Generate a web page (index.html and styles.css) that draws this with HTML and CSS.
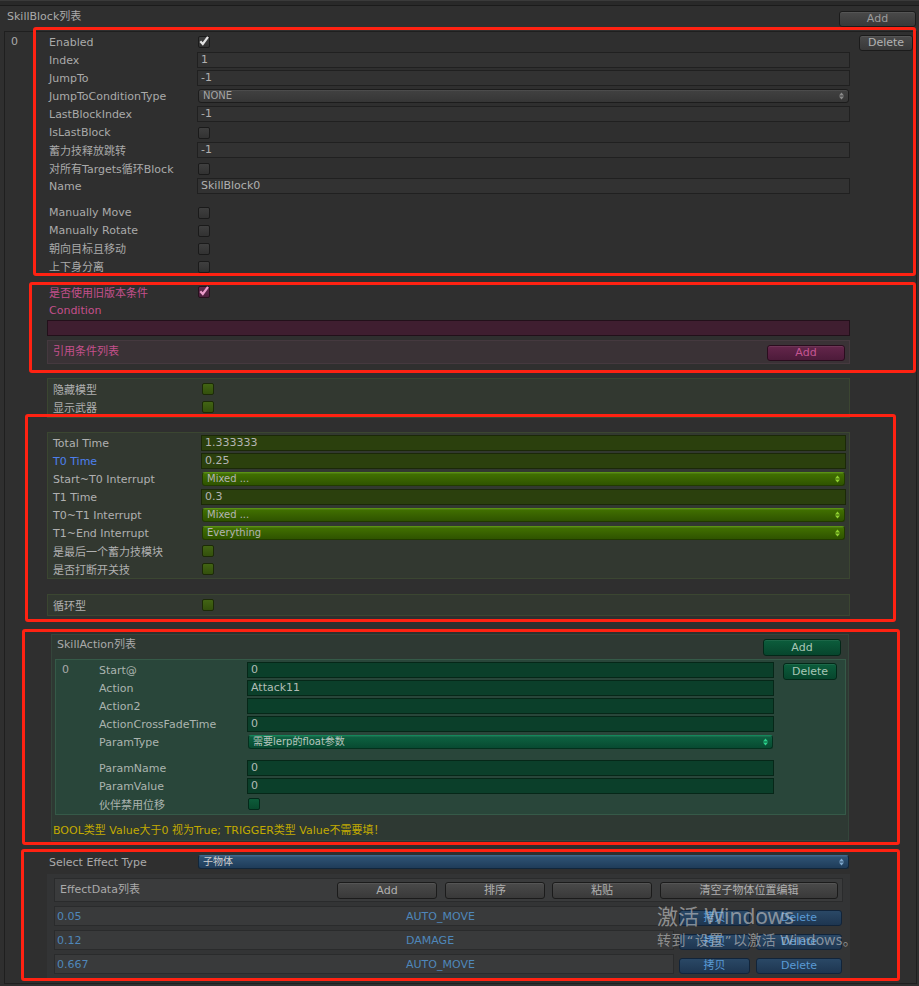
FILE: index.html
```html
<!DOCTYPE html>
<html lang="zh">
<head>
<meta charset="utf-8">
<title>SkillBlock列表</title>
<link rel="stylesheet" href="styles.css">
</head>
<body>
<div class="topbar"></div>
<div class="header"><span class="title">SkillBlock列表</span><button class="btn addtop">Add</button></div>
<div class="list">
  <div class="idx">0</div>
  <div class="content">
    <div class="row"><div class="lbl">Enabled</div><div class="chk"><svg viewBox="0 0 12 12" width="12" height="12"><path d="M2.3 6.2 L4.8 9 L10 1.8" fill="none" stroke="#e4e4e4" stroke-width="2.2"/></svg></div></div>
    <div class="row"><div class="lbl">Index</div><div class="fld">1</div></div>
    <div class="row"><div class="lbl">JumpTo</div><div class="fld">-1</div></div>
    <div class="row"><div class="lbl">JumpToConditionType</div><div class="pop"><span>NONE</span><svg class="arr" viewBox="0 0 5 8" width="5" height="8"><path d="M0 3.5L2.5 0.5L5 3.5Z M0 4.5L2.5 7.5L5 4.5Z"/></svg></div></div>
    <div class="row"><div class="lbl">LastBlockIndex</div><div class="fld">-1</div></div>
    <div class="row"><div class="lbl">IsLastBlock</div><div class="chk low"></div></div>
    <div class="row"><div class="lbl">蓄力技释放跳转</div><div class="fld">-1</div></div>
    <div class="row"><div class="lbl">对所有Targets循环Block</div><div class="chk low"></div></div>
    <div class="row"><div class="lbl">Name</div><div class="fld">SkillBlock0</div></div>
    <div class="sp8"></div>
    <div class="row"><div class="lbl">Manually Move</div><div class="chk low"></div></div>
    <div class="row"><div class="lbl">Manually Rotate</div><div class="chk low"></div></div>
    <div class="row"><div class="lbl">朝向目标且移动</div><div class="chk low"></div></div>
    <div class="row"><div class="lbl">上下身分离</div><div class="chk low"></div></div>
    <div class="sp8"></div>
    <div class="pink">
      <div class="row"><div class="lbl">是否使用旧版本条件</div><div class="chk"><svg viewBox="0 0 12 12" width="12" height="12"><path d="M2.3 6.2 L4.8 9 L10 1.8" fill="none" stroke="#ec9ccb" stroke-width="2.2"/></svg></div></div>
      <div class="row"><div class="lbl">Condition</div></div>
      <div class="pfld"></div>
      <div class="pbox"><span>引用条件列表</span><button class="btn">Add</button></div>
    </div>
    <div class="gbox g1">
      <div class="row"><div class="lbl">隐藏模型</div><div class="chk"></div></div>
      <div class="row"><div class="lbl">显示武器</div><div class="chk"></div></div>
    </div>
    <div class="gbox g2">
      <div class="row"><div class="lbl">Total Time</div><div class="fld">1.333333</div></div>
      <div class="row"><div class="lbl blue">T0 Time</div><div class="fld">0.25</div></div>
      <div class="row"><div class="lbl">Start~T0 Interrupt</div><div class="pop"><span>Mixed ...</span><svg class="arr" viewBox="0 0 5 8" width="5" height="8"><path d="M0 3.5L2.5 0.5L5 3.5Z M0 4.5L2.5 7.5L5 4.5Z"/></svg></div></div>
      <div class="row"><div class="lbl">T1 Time</div><div class="fld">0.3</div></div>
      <div class="row"><div class="lbl">T0~T1 Interrupt</div><div class="pop"><span>Mixed ...</span><svg class="arr" viewBox="0 0 5 8" width="5" height="8"><path d="M0 3.5L2.5 0.5L5 3.5Z M0 4.5L2.5 7.5L5 4.5Z"/></svg></div></div>
      <div class="row"><div class="lbl">T1~End Interrupt</div><div class="pop"><span>Everything</span><svg class="arr" viewBox="0 0 5 8" width="5" height="8"><path d="M0 3.5L2.5 0.5L5 3.5Z M0 4.5L2.5 7.5L5 4.5Z"/></svg></div></div>
      <div class="row"><div class="lbl">是最后一个蓄力技模块</div><div class="chk"></div></div>
      <div class="row"><div class="lbl">是否打断开关技</div><div class="chk"></div></div>
    </div>
    <div class="gbox g3">
      <div class="row"><div class="lbl">循环型</div><div class="chk"></div></div>
    </div>
    <div class="tbox">
      <div class="thead"><span>SkillAction列表</span><button class="btn tadd">Add</button></div>
      <div class="tinner">
        <div class="tidx">0</div>
        <div class="tcontent">
          <div class="row"><div class="lbl">Start@</div><div class="fld">0</div></div>
          <div class="row"><div class="lbl">Action</div><div class="fld">Attack11</div></div>
          <div class="row"><div class="lbl">Action2</div><div class="fld"></div></div>
          <div class="row"><div class="lbl">ActionCrossFadeTime</div><div class="fld">0</div></div>
          <div class="row"><div class="lbl">ParamType</div><div class="pop"><span class="cjk">需要lerp的float参数</span><svg class="arr" viewBox="0 0 5 8" width="5" height="8"><path d="M0 3.5L2.5 0.5L5 3.5Z M0 4.5L2.5 7.5L5 4.5Z"/></svg></div></div>
          <div class="sp8"></div>
          <div class="row"><div class="lbl">ParamName</div><div class="fld">0</div></div>
          <div class="row"><div class="lbl">ParamValue</div><div class="fld">0</div></div>
          <div class="row"><div class="lbl">伙伴禁用位移</div><div class="chk"></div></div>
        </div>
        <div class="tside"><button class="btn tdel">Delete</button></div>
      </div>
      <div class="tnote">BOOL类型 Value大于0 视为True; TRIGGER类型 Value不需要填！</div>
    </div>
    <div class="row selrow"><div class="lbl">Select Effect Type</div><div class="pop bluepop"><span class="cjk">子物体</span><svg class="arr" viewBox="0 0 5 8" width="5" height="8"><path d="M0 3.5L2.5 0.5L5 3.5Z M0 4.5L2.5 7.5L5 4.5Z"/></svg></div></div>
    <div class="ebox">
      <div class="ehead"><span>EffectData列表</span><button class="btn eb1">Add</button><button class="btn eb2">排序</button><button class="btn eb3">粘贴</button><button class="btn eb4">清空子物体位置编辑</button></div>
      <div class="erow"><div class="efld"><span class="etime">0.05</span><span>AUTO_MOVE</span></div><button class="ebtn copy">拷贝</button><button class="ebtn del">Delete</button></div>
      <div class="erow"><div class="efld"><span class="etime">0.12</span><span>DAMAGE</span></div><button class="ebtn copy">拷贝</button><button class="ebtn del">Delete</button></div>
      <div class="erow"><div class="efld"><span class="etime">0.667</span><span>AUTO_MOVE</span></div><button class="ebtn copy">拷贝</button><button class="ebtn del">Delete</button></div>
    </div>
  </div>
  <div class="side"><button class="btn del">Delete</button></div>
</div>

<div class="watermark"><div class="wm1">激活 Windows</div><div class="wm2">转到<span class="q">“</span>设置<span class="q">”</span>以激活 Windows。</div></div>

<div class="annot a1"></div>
<div class="annot a2"></div>
<div class="annot a3"></div>
<div class="annot a4"></div>
<div class="annot a5"></div>
</body>
</html>
```
FILE: styles.css
```css
* { box-sizing: border-box; }
html, body { margin: 0; padding: 0; }
body {
  width: 919px;
  height: 986px;
  overflow: hidden;
  position: relative;
  background: #2f2f2f;
  color: #aaaaaa;
  font-family: "DejaVu Sans", "Noto Sans CJK SC", sans-serif;
  font-size: 11px;
}
button { font-family: "DejaVu Sans", "Noto Sans CJK SC", sans-serif; font-size: 11px; padding: 0; cursor: default; }

.topbar { height: 6px; background: #292929; border-top: 1px solid #3a3a3a; border-bottom: 1px solid #1b1b1b; }
.header { height: 25px; display: flex; justify-content: space-between; align-items: flex-start; padding: 0 3px 0 7px; }
.header .title { line-height: 22px; }

.btn {
  height: 16px;
  border: 1px solid #1b1b1b;
  border-radius: 3px;
  background: linear-gradient(#4a4a4a, #393939);
  box-shadow: inset 0 1px 0 rgba(255,255,255,0.07);
  color: #b2b2b2;
  line-height: 14px;
  text-align: center;
}
.addtop { margin-top: 5px; width: 77px; color: #9c9c9c; }

.list {
  margin-left: 4px;
  width: 913px;
  height: 953px;
  border: 1px solid #1f1f1f;
  padding: 1px 0 4px 0;
  display: flex;
}
.idx { width: 42px; padding-left: 6px; line-height: 18px; }
.content { width: 803px; }
.side { flex: 1; padding: 2px 0 0 9px; }
.side .del { width: 54px; }

.row { display: flex; align-items: center; height: 18px; }
.lbl { flex: 0 0 150px; padding-left: 2px; white-space: nowrap; }
.fld {
  flex: 1;
  height: 16px;
  border: 1px solid #202020;
  background: #323232;
  color: #b0b0b0;
  padding-left: 3px;
  line-height: 14px;
  white-space: nowrap;
}
.pop {
  flex: 1;
  height: 14px;
  margin: 0 1px;
  border: 1px solid #1c1c1c;
  border-radius: 3px;
  background: linear-gradient(#414141, #363636);
  box-shadow: inset 0 1px 0 rgba(255,255,255,0.06);
  color: #a4a4a4;
  font-size: 10px;
  line-height: 12px;
  padding-left: 4px;
  display: flex;
  align-items: center;
}
.pop .cjk { font-size: 10px; }
.arr { margin-left: auto; margin-right: 4px; fill: #8a8a8a; }
.chk {
  width: 12px;
  height: 12px;
  margin-left: 1px;
  border: 1px solid #1a1a1a;
  border-radius: 2px;
  background: linear-gradient(#3f3f3f, #323232);
  position: relative;
}
.chk svg { position: absolute; left: -1px; top: -2px; }
.chk.low { margin-top: 2px; }
.sp8 { height: 8px; }

/* pink */
.pink .lbl { color: #c4508c; }
.pink .chk { background: linear-gradient(#62294d, #4d1f3c); border-color: #26101c; }
.pfld { margin-top: 1px; height: 16px; background: #3f1e30; border: 1px solid #22101a; }
.pbox {
  margin-top: 4px;
  height: 24px;
  background: #3a3236;
  border: 1px solid #45393f;
  display: flex;
  justify-content: space-between;
  align-items: flex-start;
  padding: 0 4px 0 5px;
  color: #c4508c;
}
.pbox span { line-height: 21px; }
.pbox .btn {
  margin-top: 4px;
  width: 78px;
  background: linear-gradient(#64264b, #4d1b3a);
  border-color: #2a0d1e;
  color: #c45592;
}

/* green */
.gbox { border: 1px solid #3b4631; background: #323830; padding: 1px 3px 1px 5px; margin-top: 14px; }
.gbox.g2 { padding-bottom: 0; }
.gbox.g3 { margin-top: 15px; }
.gbox .lbl { flex: 0 0 148px; padding-left: 0; color: #b0b0b0; }
.gbox .lbl.blue { color: #4d80ee; }
.gbox .fld { background: #2b400d; border: 1px solid #1b2808; color: #b4b4b4; }
.gbox .pop {
  background: linear-gradient(#427200, #2f5300);
  border: 1px solid #213a00;
  border-top-color: #5a9312;
  color: #b4b4b4;
}
.gbox .arr { fill: #8fd030; }
.gbox .chk { background: linear-gradient(#426414, #33500c); border-color: #1c2a07; }

/* teal */
.tbox { margin: 18px 1px 0 4px; border: 1px solid #34453b; background: #2e3933; padding-bottom: 1px; }
.thead { height: 24px; display: flex; justify-content: space-between; align-items: flex-start; padding: 0 7px 0 5px; }
.thead span { line-height: 20px; }
.tbox .btn {
  background: linear-gradient(#0c5d3c, #07462d);
  border-color: #032818;
  color: #a8c6b6;
}
.tadd { margin-top: 4px; width: 78px; height: 17px; }
.tinner { margin: 0 2px 0 3px; border: 1px solid #355a48; background: #29463a; padding: 1px 0; display: flex; }
.tidx { width: 43px; padding-left: 6px; line-height: 18px; }
.tcontent { width: 675px; }
.tside { flex: 1; padding: 2px 0 0 9px; }
.tdel { width: 54px; height: 17px; }
.tbox .lbl { flex: 0 0 148px; padding-left: 0; color: #abb4af; }
.tbox .fld { background: #0b3f2a; border: 1px solid #062718; color: #b2bcb6; }
.tbox .pop {
  background: linear-gradient(#0d6342, #084a31);
  border: 1px solid #04301e;
  border-top-color: #13885a;
  color: #b8c4be;
}
.tbox .arr { fill: #2ad08a; }
.tbox .chk { background: linear-gradient(#0d5c3a, #084a2d); border-color: #03291a; }
.tnote { margin-top: 8px; line-height: 16px; padding-left: 1px; color: #c2aa00; white-space: nowrap; }

/* blue / effect */
.selrow { margin-top: 12px; }
.selrow .lbl { flex: 0 0 151px; }
.bluepop {
  margin-left: 0;
  background: linear-gradient(#2f5475, #1f3c59);
  border: 1px solid #11263a;
  border-top-color: #3c6890;
  color: #d0d0d0;
}
.bluepop .arr { fill: #7fa8cc; }
.ebox { margin-top: 3px; background: #333435; padding: 4px 7px; height: 104px; }
.ehead {
  height: 24px;
  border: 1px solid #2a2b2c;
  background: #3a3b3c;
  display: flex;
  align-items: flex-start;
  padding: 0 4px 0 5px;
}
.ehead span { flex: 1; line-height: 22px; }
.ehead .btn { margin-top: 3px; height: 17px; width: 100px; color: #b0b0b0; }
.ehead .eb2 { margin-left: 8px; }
.ehead .eb3 { margin-left: 7px; }
.ehead .eb4 { margin-left: 8px; width: 178px; }
.erow { display: flex; align-items: flex-end; height: 20px; margin-top: 4px; }
.efld {
  width: 620px;
  height: 20px;
  border: 1px solid #2a2b2c;
  background: #393a3b;
  color: #4f87ba;
  display: flex;
  align-items: center;
  padding-left: 2px;
}
.etime { width: 349px; }
.ebtn {
  height: 16px;
  border: 1px solid #11243a;
  border-radius: 3px;
  background: linear-gradient(#2a4866, #1e3651);
  color: #5a9ad4;
  line-height: 14px;
}
.ebtn.copy { width: 71px; margin-left: 5px; }
.ebtn.del { width: 86px; margin-left: 6px; }

/* windows watermark */
.watermark {
  position: absolute;
  left: 657px;
  top: 903px;
  font-family: "Noto Sans", "Noto Sans CJK SC", sans-serif;
  color: rgba(200, 200, 200, 0.62);
  white-space: nowrap;
}
.wm1 { font-size: 21px; line-height: 26px; }
.wm2 { font-size: 14px; line-height: 22px; letter-spacing: 0.4px; }
.wm2 .q { font-family: "DejaVu Sans", sans-serif; font-size: 13px; margin: 0 1px; }

/* red annotation frames */
.annot { position: absolute; border: 3px solid #ff2212; border-radius: 3px; }
.a1 { left: 33px; top: 27px; width: 883px; height: 249px; }
.a2 { left: 29px; top: 282px; width: 887px; height: 91px; }
.a3 { left: 25px; top: 414px; width: 871px; height: 208px; }
.a4 { left: 22px; top: 629px; width: 878px; height: 216px; }
.a5 { left: 21px; top: 849px; width: 879px; height: 132px; }
```
